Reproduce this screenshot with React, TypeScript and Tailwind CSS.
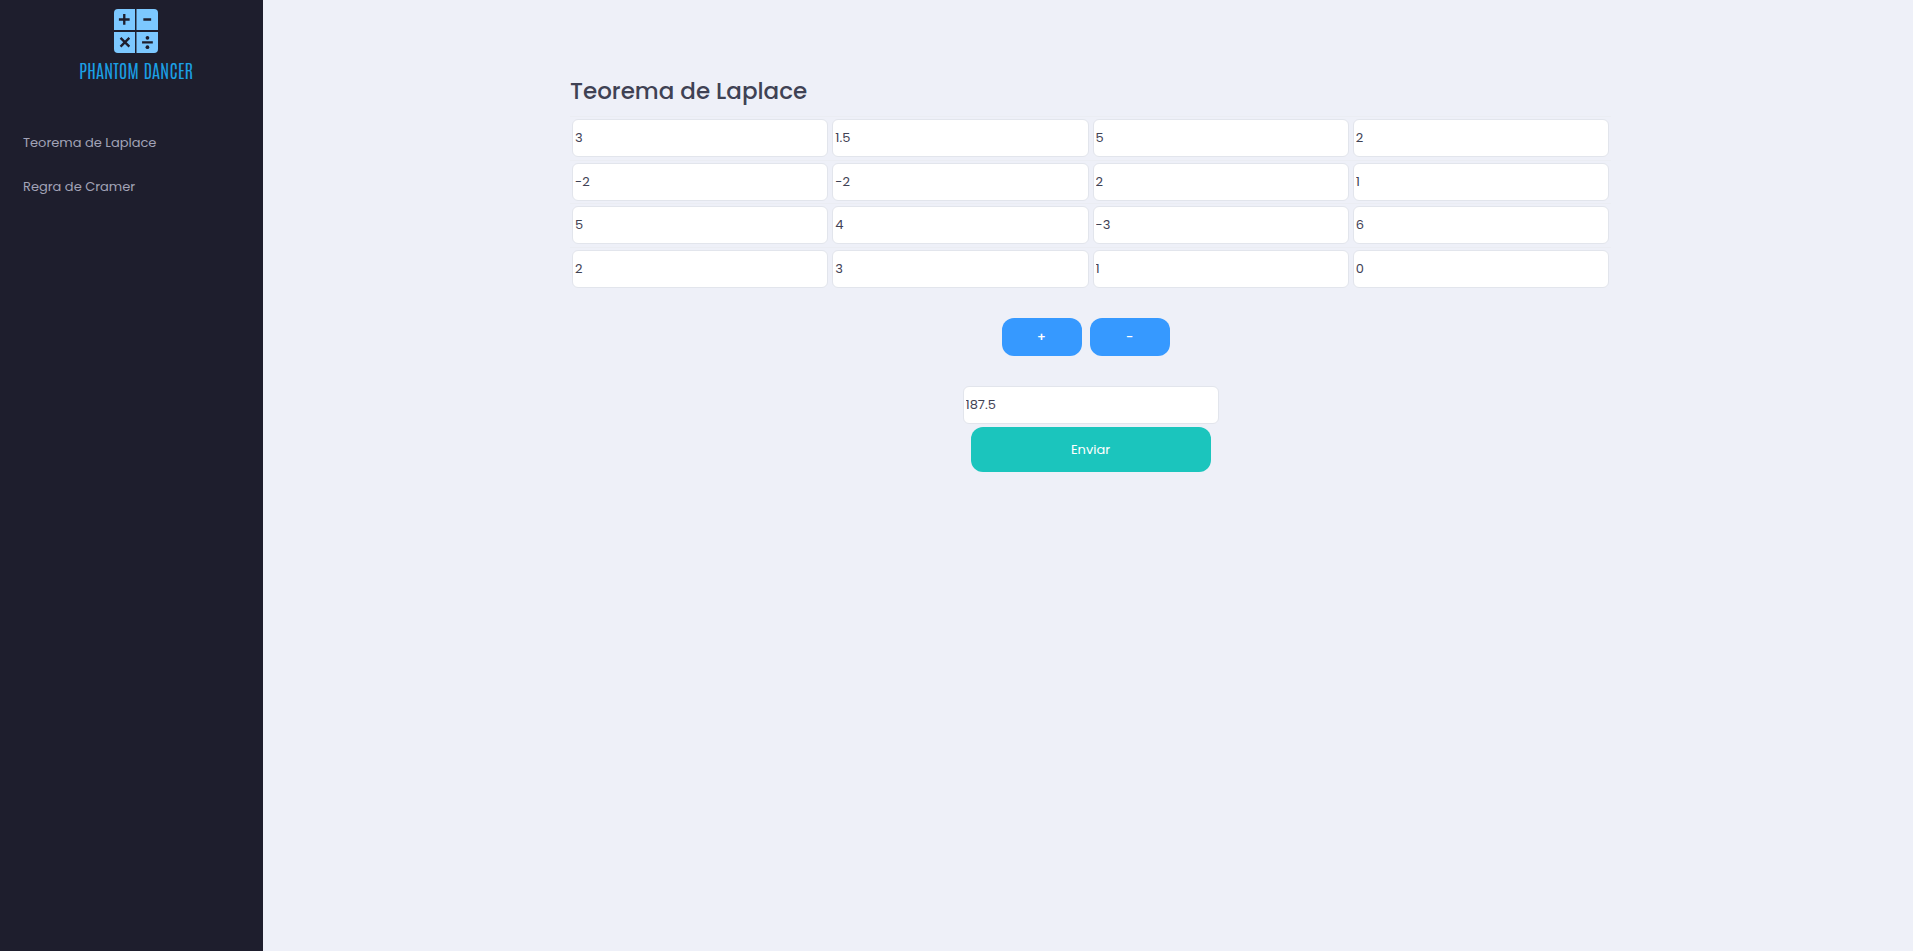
import { useState } from "react";

const initialMatrix = [
  ["3", "1.5", "5", "2"],
  ["-2", "-2", "2", "1"],
  ["5", "4", "-3", "6"],
  ["2", "3", "1", "0"],
];

const fieldClass =
  "block h-[38px] w-full rounded-md border border-[#e2e5ec] bg-white px-0.5 text-[13px] text-[#3f4254] outline-none";

const stepButtonClass =
  "h-[38px] w-20 rounded-xl bg-[#3699ff] text-[13px] font-medium text-white";

function Logo() {
  return (
    <a href="#" className="flex flex-col items-center gap-[5px] pt-[9px]">
      <svg className="h-11 w-11" viewBox="0 0 45 45" fill="none" aria-hidden="true">
        <path d="M4 0h17.500v21.500H0V4a4 4 0 0 1 4-4Z" fill="#7cc8ff" />
        <path d="M23 0H41a4 4 0 0 1 4 4v17.500H23Z" fill="#7cc8ff" />
        <path d="M0 23.500h21.500V45H4a4 4 0 0 1-4-4Z" fill="#7cc8ff" />
        <path d="M23 23.500H45V41a4 4 0 0 1-4 4H23Z" fill="#7cc8ff" />
        <path
          d="M5 10.700h11M10.500 5.200v11M30 10.700h8M6.700 29.500l9 9M15.700 29.500l-9 9M28.700 34.200h11"
          stroke="#1e1e2d"
          strokeWidth="2.400"
        />
        <circle cx="34.200" cy="29.500" r="1.900" fill="#1e1e2d" />
        <circle cx="34.200" cy="39" r="1.900" fill="#1e1e2d" />
      </svg>
      <span className="font-['Antonio','Liberation_Sans',sans-serif] text-[19px] leading-6 font-extralight whitespace-nowrap text-[#1b9fe4]">
        PHANTOM DANCER
      </span>
    </a>
  );
}

export default function App() {
  const [matrix, setMatrix] = useState(initialMatrix);
  const [result, setResult] = useState("187.5");

  const setCell = (row: number, col: number, value: string) =>
    setMatrix(matrix.map((r, i) => (i === row ? r.map((c, j) => (j === col ? value : c)) : r)));

  return (
    <div className="flex min-h-screen bg-[#eef0f8] font-[Poppins,Inter,sans-serif] text-[13px] text-[#3f4254]">
      <aside className="w-[263px] shrink-0 bg-[#1e1e2d]">
        <div className="flex justify-center pl-[9px]">
          <Logo />
        </div>
        <nav className="mt-[39px] flex flex-col text-[#a2a3b7]">
          <a href="#laplace" className="flex h-11 items-center px-[23px]">Teorema de Laplace</a>
          <a href="#cramer" className="flex h-11 items-center px-[23px]">Regra de Cramer</a>
        </nav>
      </aside>
      <main className="flex flex-1 justify-center pt-[75px] pl-[5px]">
        <form className="w-full max-w-[1041px]" onSubmit={(e) => e.preventDefault()}>
          <h1 className="mb-[9px] text-[23px] leading-8 font-medium">Teorema de Laplace</h1>
          <table className="h-[174px] w-full table-fixed border-collapse">
            <tbody>
              {matrix.map((row, i) => (
                <tr key={i} className="border-t border-[#ebedf3]">
                  {row.map((cell, j) => (
                    <td key={j} className="p-0.5">
                      <input
                        aria-label={`Linha ${i + 1}, coluna ${j + 1}`}
                        className={fieldClass}
                        value={cell}
                        onChange={(e) => setCell(i, j, e.target.value)}
                      />
                    </td>
                  ))}
                </tr>
              ))}
            </tbody>
          </table>
          <div className="mt-7 flex justify-center gap-2 pr-2.5">
            <button type="button" className={stepButtonClass}>+</button>
            <button type="button" className={stepButtonClass}>-</button>
          </div>
          <div className="mx-auto mt-[30px] flex w-64 flex-col items-center gap-[3px]">
            <input
              aria-label="Resultado"
              className={fieldClass}
              value={result}
              onChange={(e) => setResult(e.target.value)}
            />
            <button type="submit" className="h-[45px] w-60 rounded-xl bg-[#1bc5bd] text-[13px] text-white">
              Enviar
            </button>
          </div>
        </form>
      </main>
    </div>
  );
}
